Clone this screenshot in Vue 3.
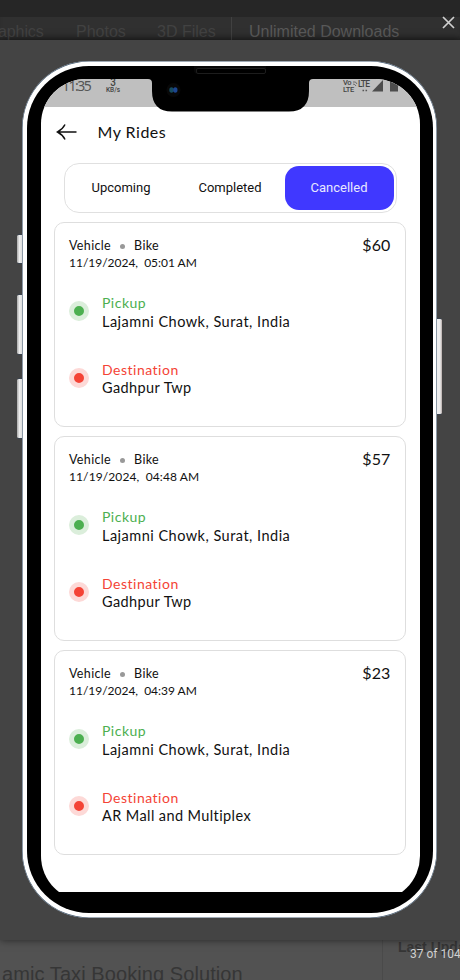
<script setup>
const tabs = ['Upcoming', 'Completed', 'Cancelled']
const active = 'Cancelled'
const rides = [
  { time: '05:01 AM', price: '$60', to: 'Gadhpur Twp' },
  { time: '04:48 AM', price: '$57', to: 'Gadhpur Twp' },
  { time: '04:39 AM', price: '$23', to: 'AR Mall and Multiplex' },
]
</script>

<template>
  <div class="page">
    <div class="strip"></div>
    <nav class="nav">
      <span class="n1">aphics</span>
      <span class="n2">Photos</span>
      <span class="n3">3D Files</span>
      <span class="n4">Unlimited Downloads</span>
    </nav>

    <main class="viewer">
      <div class="phone">
        <i class="key k1"></i><i class="key k2"></i><i class="key k3"></i><i class="key k4"></i>
        <div class="bezel">
          <div class="clip">
            <div class="screen">
              <div class="status">
                <span class="clock">11:35</span>
                <span class="rate"><b>3</b><small>KB/s</small></span>
                <span class="volte"><span>Vo</span><span>LTE</span></span>
                <span class="lte">LTE</span>
                <svg class="signal" width="62" height="28" viewBox="0 0 62 28">
                  <path d="M0 3q3-1 4 2M0 5q2 0 3 2" fill="none" stroke="#555" stroke-width=".8" />
                  <path d="M9.500 11.500h1.600M12.500 11.500h1.600" stroke="#555" stroke-width="1.500" />
                  <path d="M19 12.500L30 1v11.500z" fill="#4d4d4d" />
                  <path d="M37 3h2V0h4v3h2v9.500h-8z" fill="#4d4d4d" />
                </svg>
              </div>

              <header class="bar">
                <svg width="22" height="18" viewBox="0 0 22 18" fill="none" stroke="#111" stroke-width="1.500">
                  <path d="M20.500 9H1.500M9 1.500Q6.500 6.500 1.500 9Q6.500 11.500 9 16.500" />
                </svg>
                <h1>My Rides</h1>
              </header>

              <div class="tabs">
                <span v-for="t in tabs" :key="t" class="tab" :class="{ on: t === active }">{{ t }}</span>
              </div>

              <section class="list">
                <article v-for="r in rides" :key="r.time" class="card">
                  <div class="top">
                    <div class="kind">Vehicle<i class="sep"></i>Bike</div>
                    <div class="price">{{ r.price }}</div>
                  </div>
                  <div class="date">11/19/2024,&nbsp; {{ r.time }}</div>
                  <div class="stop from">
                    <i class="dot"></i>
                    <div class="info"><div class="label pick">Pickup</div><div class="place">Lajamni Chowk, Surat, India</div></div>
                  </div>
                  <div class="stop to">
                    <i class="dot"></i>
                    <div class="info"><div class="label dest">Destination</div><div class="place">{{ r.to }}</div></div>
                  </div>
                </article>
              </section>
            </div>
          </div>
          <div class="notch">
            <svg width="165" height="33" viewBox="0 0 165 33">
              <path d="M0 0H165Q161 0 161 4V12Q161 32.500 141 32.500H24Q4 32.500 4 12V4Q4 0 0 0Z" fill="#000" />
              <circle cx="25.500" cy="11" r="7" fill="#080808" />
              <ellipse cx="23.500" cy="11" rx="2.200" ry="2.800" fill="#174c60" />
              <ellipse cx="27.300" cy="11" rx="2.200" ry="2.800" fill="#1d4690" />
            </svg>
          </div>
          <div class="speaker"></div>
        </div>
      </div>
    </main>

    <footer class="below">
      <div class="title">amic Taxi Booking Solution</div>
      <div class="side">Last Update</div>
    </footer>

    <svg class="close" width="13" height="13" viewBox="0 0 13 13" stroke="#d0d0d0" stroke-width="1.700">
      <path d="M1 1L12 12M12 1L1 12" />
    </svg>
    <div class="count">37 of 104</div>
  </div>
</template>

<style>
body { margin: 0; overflow: hidden; }
</style>

<style scoped>
* { box-sizing: border-box; }
.page { position: relative; width: 460px; height: 980px; overflow: hidden; background: #525252; font-family: "Liberation Sans", sans-serif; white-space: nowrap; }
.strip { height: 17px; background: #262626; }
.nav { height: 23px; display: flex; background: #303030; color: #424242; font-size: 16px; line-height: 29px; box-shadow: inset 0 -5px 5px -3px #242424; overflow: hidden; }
.n1 { width: 78px; margin-left: -2px; letter-spacing: -.1px; }
.n2 { width: 81px; }
.n3 { width: 74px; }
.n4 { border-left: 1px solid #414141; padding-left: 17px; color: #595959; }
.viewer { position: relative; z-index: 1; height: 900px; padding: 21px 22px; background: #444; box-shadow: 0 0 8px rgba(0,0,0,.55); }
.phone { position: relative; width: 415px; height: 857px; padding: 5px 4px 5px 5px; border-radius: 67px; background: #fff; box-shadow: inset 0 0 0 .6px #40566c; }
.key { position: absolute; width: 5px; background: linear-gradient(90deg, #aaa, #eee 50%, #ddd); border-radius: 2px 0 0 2px; border: solid #3b4450; border-width: 1px 0; }
.k1 { left: -5px; top: 173px; height: 30px; }
.k2 { left: -5px; top: 233px; height: 61px; }
.k3 { left: -5px; top: 317px; height: 61px; }
.k4 { left: 415px; top: 257px; height: 97px; border-radius: 0 2px 2px 0; background: linear-gradient(90deg, #eee 60%, #b5aaa8); }
.bezel { position: relative; height: 847px; padding: 13px 13.500px 0 14px; background: #000; border-radius: 62px; }
.clip { height: 813px; overflow: hidden; }
.screen { height: 822px; border-radius: 45px; background: #fff; overflow: hidden; }
.status { position: relative; height: 28px; background: #bfbfbf; color: #555; overflow: hidden; }
.clock { position: absolute; left: 21px; top: -1px; font: 14px/16px "Noto Sans", sans-serif; letter-spacing: -1.5px; }
.rate { position: absolute; left: 62px; top: 0; width: 20px; text-align: center; display: flex; flex-direction: column; color: #444; }
.rate b { font: 500 10px/8px Roboto, sans-serif; }
.rate small { font: 500 6.500px/7px Roboto, sans-serif; }
.volte { position: absolute; left: 302px; top: 0; display: flex; flex-direction: column; font: 500 7.500px/7px Roboto, sans-serif; letter-spacing: -.3px; color: #444; }
.lte { position: absolute; left: 317px; top: 0; font: 500 8.500px/10px Roboto, sans-serif; letter-spacing: -.8px; color: #444; }
.signal { position: absolute; left: 312px; top: 0; }
.notch { position: absolute; left: 121px; top: 13px; height: 33px; }
.notch svg { display: block; }
.speaker { position: absolute; left: 167px; top: 0; width: 72px; height: 8px; border-radius: 0 0 4px 4px; background: #080808; }
.speaker::after { content: ""; display: block; width: 68px; height: 4px; margin: 2px; border-radius: 2px; background: #000; border: 1px solid #1d1d1d; }
.bar { height: 50px; display: flex; align-items: center; padding-left: 15px; gap: 19.500px; }
h1 { margin: 0; font: 16px/20px Lato, sans-serif; color: #111; letter-spacing: .5px; }
.tabs { display: flex; width: 333px; height: 50px; margin: 6px 0 0 22.500px; padding: 2px; border: 1px solid #e0e0e0; border-radius: 15px; }
.tab { flex: 1; border-radius: 14px; text-align: center; font: 13px/43px Roboto, sans-serif; color: #111; }
.on { background: #4038ff; color: #e8e8ff; }
.list { display: flex; flex-direction: column; gap: 9px; padding: 9px 14px 0 13px; }
.card { height: 205px; padding: 14px 14px 0; border: 1px solid #dedede; border-radius: 10px; font-family: Lato, sans-serif; color: #111; }
.top { display: flex; justify-content: space-between; height: 18px; }
.kind { display: flex; align-items: center; font-size: 12.500px; line-height: 18px; letter-spacing: .35px; }
.sep { width: 5px; height: 5px; border-radius: 50%; background: #999; margin: 0 9px; }
.price { font-size: 16px; line-height: 16px; letter-spacing: .1px; }
.date { font-size: 12px; line-height: 16px; letter-spacing: -.02px; }
.card:nth-child(2) .date { letter-spacing: .1px; }
.stop { display: flex; align-items: center; gap: 13px; height: 38px; }
.from { margin-top: 21px; }
.to { margin-top: 28.500px; }
.dot { width: 20px; height: 20px; border-radius: 50%; border: 5.300px solid #dbeedb; background: #4caf50; }
.to .dot { background: #f44336; border-color: #fdd9d7; }
.info { padding-top: 3px; }
.label, .place { font-size: 14px; line-height: 18.500px; letter-spacing: .5px; }
.place { font-size: 14.500px; letter-spacing: .48px; }
.to .place { letter-spacing: .4px; }
.pick { color: #4caf50; }
.dest { color: #f44336; }
.below { height: 40px; display: flex; color: #363636; }
.title { flex: none; width: 383px; padding-left: 2px; border-right: 1px solid #4a4a4a; font-size: 20px; line-height: 68px; letter-spacing: .08px; }
.side { flex: none; padding-left: 15px; font-size: 14px; font-weight: 700; line-height: 14px; }
.close { position: absolute; z-index: 2; left: 442px; top: 16px; }
.count { position: absolute; z-index: 2; left: 410px; top: 946px; font: 12px/16px Roboto, sans-serif; color: #d0d0d0; }
</style>
